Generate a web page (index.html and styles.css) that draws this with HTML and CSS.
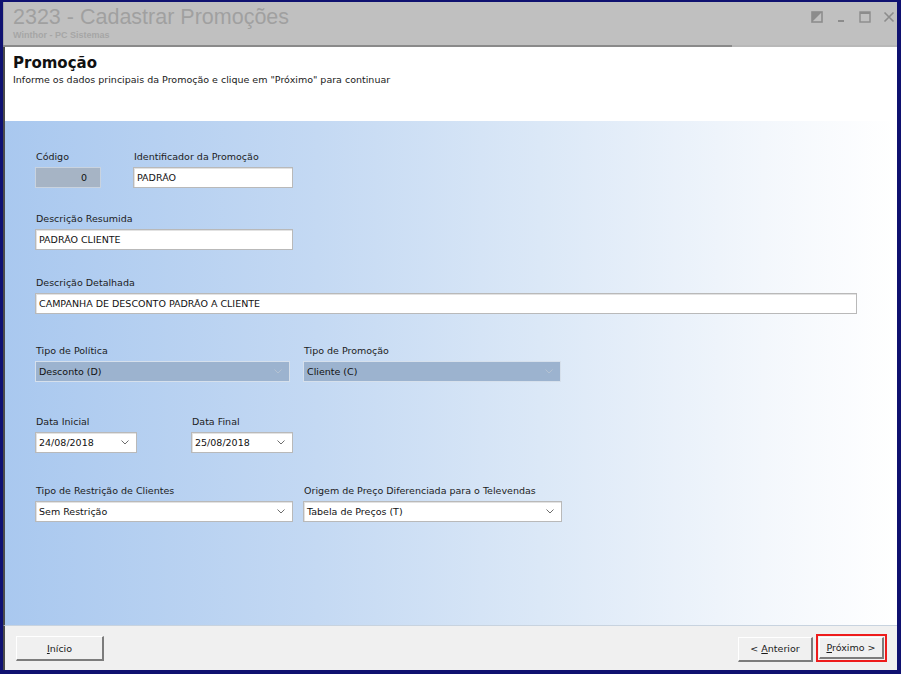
FILE: index.html
```html
<!DOCTYPE html>
<html lang="pt-BR">
<head>
<meta charset="utf-8">
<title>2323 - Cadastrar Promoções</title>
<link rel="stylesheet" href="styles.css">
</head>
<body>
<div class="window">
  <div class="titlebar">
    <div class="title-text">
      <div class="title">2323 - Cadastrar Promoções</div>
      <div class="subtitle">Winthor - PC Sistemas</div>
    </div>
    <div class="controls">
      <svg class="ctl" width="12" height="12" viewBox="0 0 12 12"><rect x="1" y="1" width="10" height="10" fill="none" stroke="#8c8c8c" stroke-width="1.6"/><path d="M1 1 L11 1 L1 11 Z" fill="#8c8c8c"/></svg>
      <svg class="ctl" width="12" height="12" viewBox="0 0 12 12"><rect x="3" y="9" width="6" height="2" fill="#8c8c8c"/></svg>
      <svg class="ctl" width="12" height="12" viewBox="0 0 12 12"><rect x="1" y="1" width="10" height="10" fill="none" stroke="#8c8c8c" stroke-width="1.4"/><rect x="1" y="1" width="10" height="2" fill="#8c8c8c"/></svg>
      <svg class="ctl" width="12" height="12" viewBox="0 0 12 12"><path d="M1.5 1.5 L10.5 10.5 M10.5 1.5 L1.5 10.5" stroke="#8c8c8c" stroke-width="1.6"/></svg>
    </div>
  </div>
  <div class="title-sep"></div>

  <div class="page-head">
    <h1>Promoção</h1>
    <p>Informe os dados principais da Promoção e clique em "Próximo" para continuar</p>
  </div>

  <div class="form-area">
    <div class="row r1">
      <div class="field w-codigo">
        <label>Código</label>
        <div class="box readonly num">0</div>
      </div>
      <div class="field w-ident">
        <label>Identificador da Promoção</label>
        <div class="box">PADRÃO</div>
      </div>
    </div>

    <div class="row r2">
      <div class="field w-wide">
        <label>Descrição Resumida</label>
        <div class="box">PADRÃO CLIENTE</div>
      </div>
    </div>

    <div class="row r3">
      <div class="field w-full">
        <label>Descrição Detalhada</label>
        <div class="box">CAMPANHA DE DESCONTO PADRÃO A CLIENTE</div>
      </div>
    </div>

    <div class="row r4">
      <div class="field w-pol">
        <label>Tipo de Política</label>
        <div class="box disabled select"><span>Desconto (D)</span><svg class="chev" width="8" height="5" viewBox="0 0 8 5"><path d="M0.5 0.5 L4 4 L7.5 0.5" fill="none" stroke="#b4c2d2" stroke-width="1"/></svg></div>
      </div>
      <div class="field w-prom">
        <label>Tipo de Promoção</label>
        <div class="box disabled select"><span>Cliente (C)</span><svg class="chev" width="8" height="5" viewBox="0 0 8 5"><path d="M0.5 0.5 L4 4 L7.5 0.5" fill="none" stroke="#b4c2d2" stroke-width="1"/></svg></div>
      </div>
    </div>

    <div class="row r5">
      <div class="field w-date">
        <label>Data Inicial</label>
        <div class="box select"><span>24/08/2018</span><svg class="chev" width="8" height="5" viewBox="0 0 8 5"><path d="M0.5 0.5 L4 4 L7.5 0.5" fill="none" stroke="#6d6d6d" stroke-width="1"/></svg></div>
      </div>
      <div class="field w-date gap-date">
        <label>Data Final</label>
        <div class="box select"><span>25/08/2018</span><svg class="chev" width="8" height="5" viewBox="0 0 8 5"><path d="M0.5 0.5 L4 4 L7.5 0.5" fill="none" stroke="#6d6d6d" stroke-width="1"/></svg></div>
      </div>
    </div>

    <div class="row r6">
      <div class="field w-restr">
        <label>Tipo de Restrição de Clientes</label>
        <div class="box select"><span>Sem Restrição</span><svg class="chev" width="8" height="5" viewBox="0 0 8 5"><path d="M0.5 0.5 L4 4 L7.5 0.5" fill="none" stroke="#6d6d6d" stroke-width="1"/></svg></div>
      </div>
      <div class="field w-orig">
        <label>Origem de Preço Diferenciada para o Televendas</label>
        <div class="box select"><span>Tabela de Preços (T)</span><svg class="chev" width="8" height="5" viewBox="0 0 8 5"><path d="M0.5 0.5 L4 4 L7.5 0.5" fill="none" stroke="#6d6d6d" stroke-width="1"/></svg></div>
      </div>
    </div>
  </div>

  <div class="footer">
    <button class="btn btn-inicio"><u>I</u>nício</button>
    <div class="nav">
      <button class="btn btn-ant">&lt; <u>A</u>nterior</button>
      <div class="highlight"><button class="btn btn-prox"><u>P</u>róximo &gt;</button></div>
    </div>
  </div>
</div>
</body>
</html>
```

FILE: styles.css
```css
* { box-sizing: border-box; }

html, body {
  margin: 0;
  padding: 0;
  width: 901px;
  height: 674px;
  overflow: hidden;
  background: #0d0d6b;
  font-family: "DejaVu Sans", Verdana, sans-serif;
  font-size: 9.5px;
  color: #1a1a1a;
}

.window {
  width: 901px;
  height: 674px;
  border-style: solid;
  border-color: #0f1170;
  border-width: 2px 4px 4px 3px;
  display: flex;
  flex-direction: column;
  background: #c0c0c0;
}

/* title bar */
.titlebar {
  height: 43px;
  background: #c0c0c0;
  display: flex;
  justify-content: space-between;
  padding: 4px 0 0 9px;
  border-left: 1px solid #a8a8a8;
}

.title {
  font-family: "Liberation Sans", Arial, sans-serif;
  font-size: 21.5px;
  line-height: 23px;
  color: #a0a0a0;
}

.subtitle {
  font-family: "Liberation Sans", Arial, sans-serif;
  font-size: 9px;
  font-weight: bold;
  color: #a6a6a6;
  margin-top: 1px;
}

.controls {
  display: flex;
  gap: 12px;
  padding: 5px 2px 0 0;
}

.ctl { display: block; }

.title-sep {
  height: 2px;
  background: linear-gradient(to right, #8a8a8a 0, #8a8a8a 729px, #b8b8b8 729px);
}

/* page header */
.page-head {
  height: 74px;
  background: #ffffff;
  padding: 6px 8px 0;
  border-left: 2px solid #4a4a4a;
}

.page-head h1 {
  margin: 0;
  font-family: "DejaVu Sans", Verdana, sans-serif;
  font-size: 15px;
  line-height: 20px;
  font-weight: bold;
  color: #111;
}

.page-head p {
  margin: 1px 0 0;
  font-size: 9.5px;
  color: #1a1a1a;
}

/* form body */
.form-area {
  flex: 1;
  background: linear-gradient(to right, #a9c8ef 0%, #c4d9f3 35%, #dbe8f7 60%, #f3f7fc 85%, #ffffff 100%);
  border-left: 2px solid #4a4a4a;
  border-bottom: 1px solid #c8d3df;
  padding: 30px 0 0 30px;
}

.row {
  display: flex;
  align-items: flex-start;
}

.r2 { margin-top: 25px; }
.r3 { margin-top: 27px; }
.r4 { margin-top: 31px; }
.r5 { margin-top: 34px; }
.r6 { margin-top: 32px; }

.field label {
  display: block;
  height: 12px;
  line-height: 12px;
  padding-left: 1px;
  margin-bottom: 4px;
  font-size: 9.5px;
  color: #1c1c1c;
}

.box {
  height: 21px;
  border: 1px solid #b9b9b9;
  box-shadow: inset 1px 1px 0 #e2e2e2;
  background: #ffffff;
  padding: 0 3px;
  line-height: 19px;
  font-size: 9.5px;
  color: #111;
  white-space: nowrap;
}

.box.readonly {
  background: #a6b4c5;
  border-color: #c9d3df;
  box-shadow: none;
}

.box.num {
  text-align: right;
  padding-right: 13px;
}

.box.disabled {
  background: #9cb3cf;
  border-color: #d6e0ec;
  box-shadow: none;
}

.select {
  display: flex;
  align-items: center;
  justify-content: space-between;
  padding-right: 7px;
}

.chev { display: block; }

.w-codigo { width: 66px; }
.w-ident  { width: 160px; margin-left: 32px; }
.w-wide   { width: 258px; }
.w-full   { width: 822px; }
.w-pol    { width: 255px; }
.w-prom   { width: 258px; margin-left: 13px; }
.w-date   { width: 102px; }
.gap-date { margin-left: 54px; }
.w-restr  { width: 258px; }
.w-orig   { width: 259px; margin-left: 10px; }

/* footer buttons */
.footer {
  height: 44px;
  background: #f0f0f0;
  border-left: 2px solid #4a4a4a;
  display: flex;
  align-items: flex-start;
  justify-content: space-between;
  padding: 10px 10px 0 11px;
}

.btn {
  font-family: "DejaVu Sans", Verdana, sans-serif;
  font-size: 9.5px;
  color: #1a1a1a;
  background: #f0f0f0;
  height: 25px;
  border-style: solid;
  border-width: 1px 2px 2px 1px;
  border-color: #ffffff #7c7c7c #7c7c7c #ffffff;
  padding: 0;
  margin: 0;
}

.btn-inicio { width: 88px; }

.nav {
  display: flex;
  align-items: center;
  gap: 3px;
}

.btn-ant { width: 75px; }

.highlight {
  border: 2px solid #ee1b1b;
  padding: 1px;
  margin-top: -2px;
}

.btn-prox { width: 65px; height: 22px; }
```
